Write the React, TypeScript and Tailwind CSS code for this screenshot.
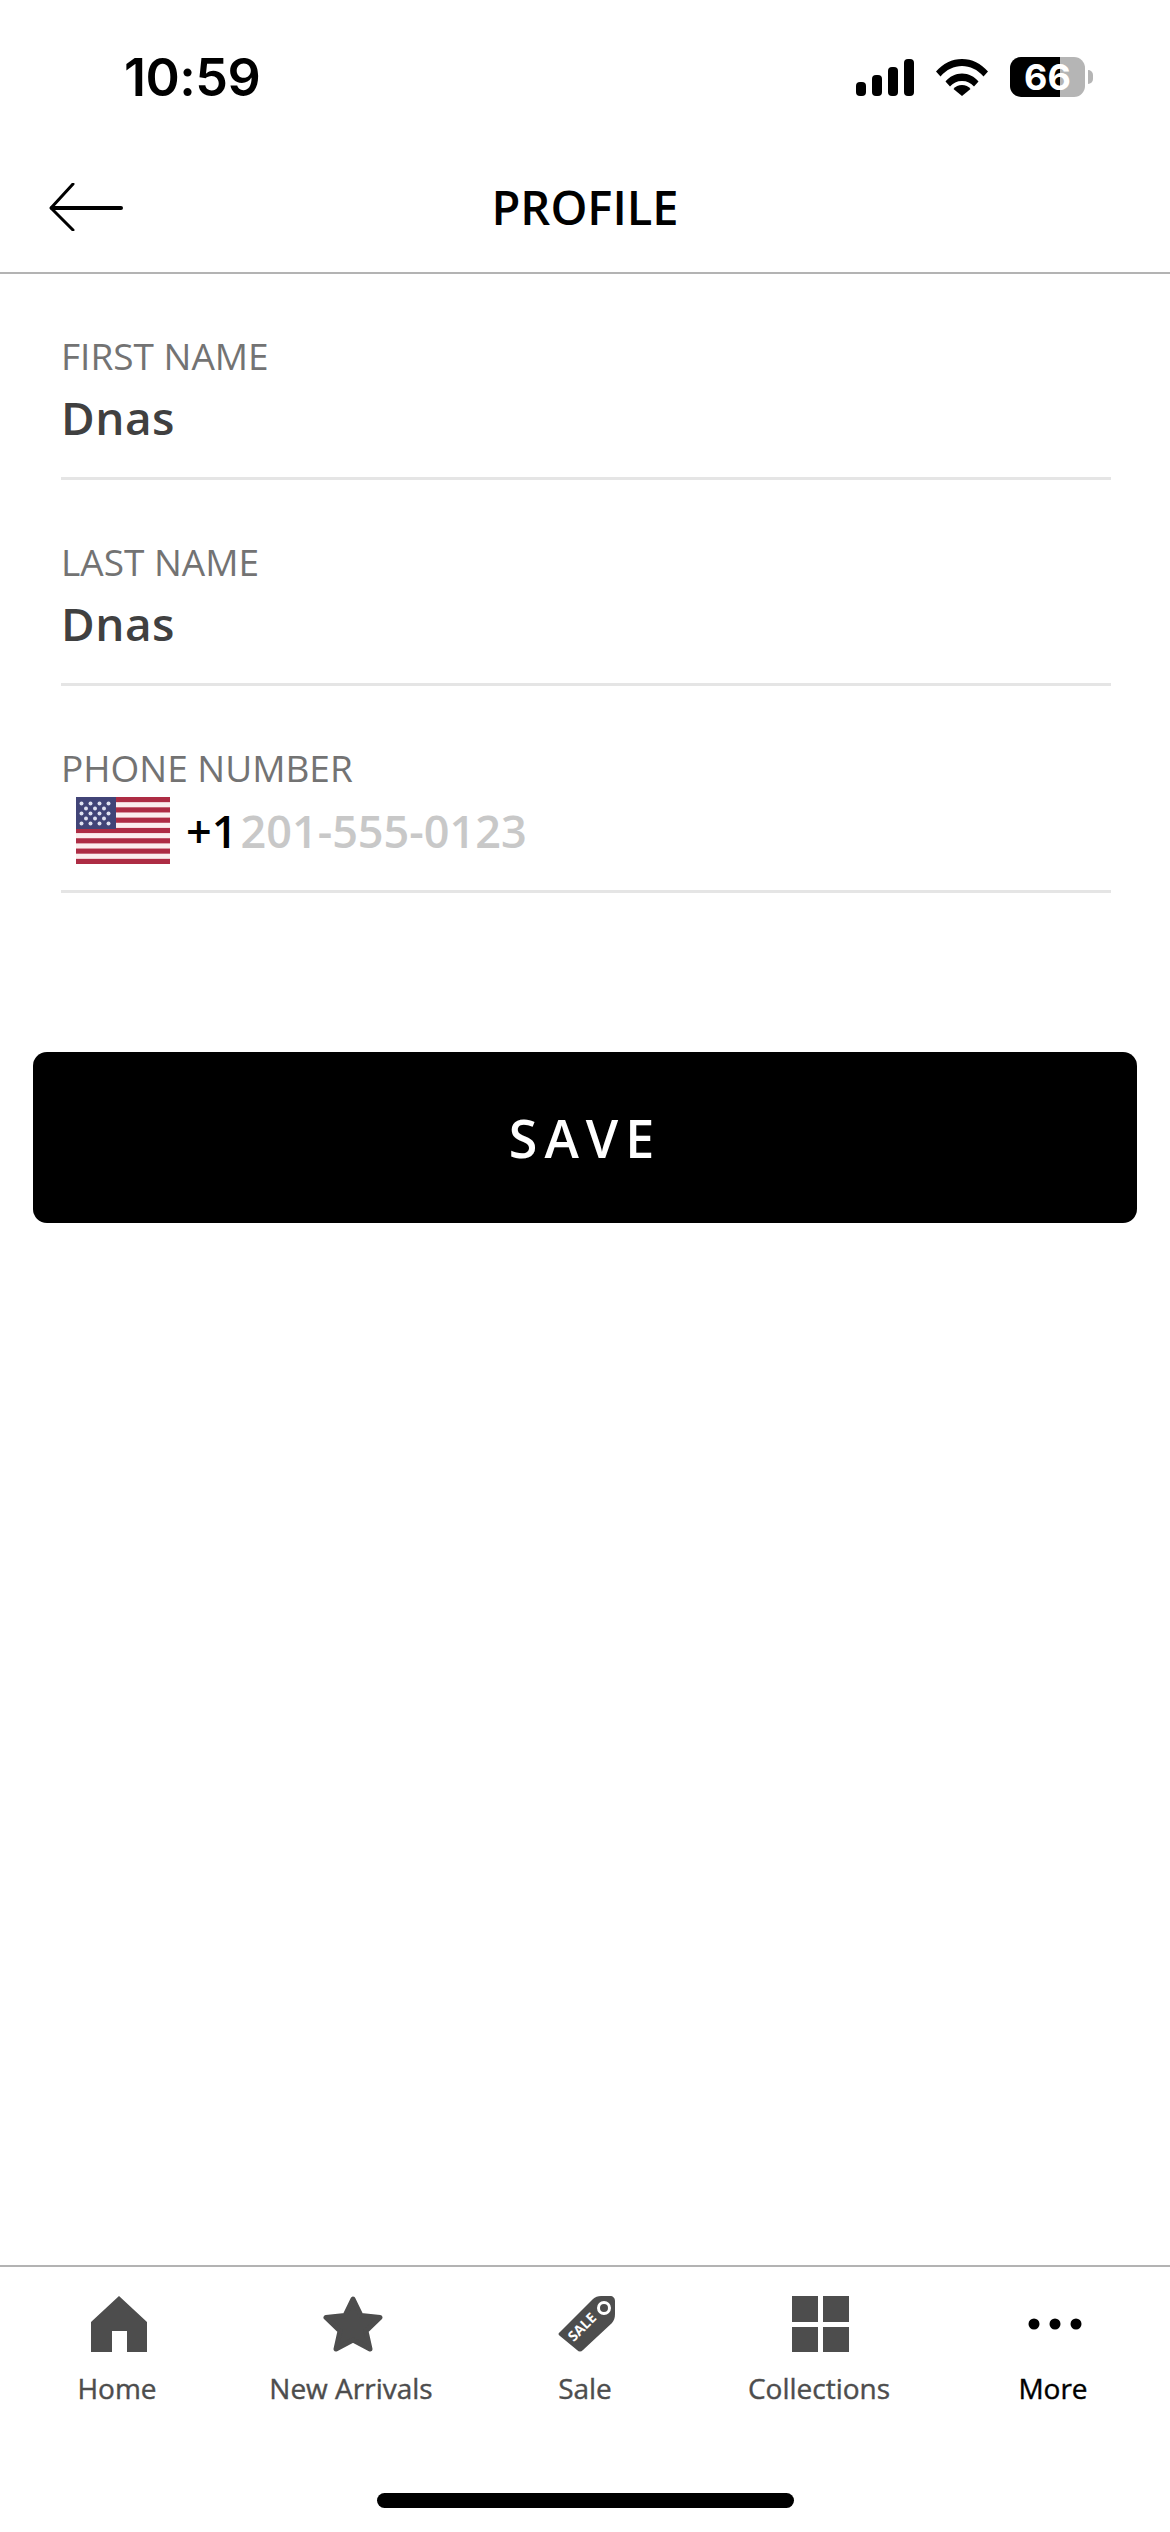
const FONT = "font-['Open_Sans',sans-serif]";

function Signal() {
  return (
    <svg width="58" height="37" viewBox="0 0 58 37" fill="#000">
      <rect x="0" y="23" width="10" height="14" rx="4" />
      <rect x="16" y="16" width="10" height="21" rx="4" />
      <rect x="32" y="8" width="10" height="29" rx="4" />
      <rect x="48" y="0" width="10" height="37" rx="4" />
    </svg>
  );
}

function Wifi() {
  return (
    <svg width="52" height="37" viewBox="0 0 52 37" fill="#000">
      <path d="M0 12.5C7 4.5 16 0 26 0s19 4.500 26 12.500l-4.500 5C41.500 10.500 34 7 26 7S10.500 10.500 4.500 17.500z" />
      <path d="M9.500 22.500C13.500 17.500 19.500 14.500 26 14.500s12.500 3 16.500 8L38 27.500c-3-3.500-7-5.500-12-5.500s-9 2-12 5.500z" />
      <path d="M17.500 30C19.500 27.500 22.500 26 26 26s6.500 1.500 8.500 4L26 37z" />
    </svg>
  );
}

function Battery() {
  return (
    <div className="flex items-center gap-[3px]">
      <div className="flex h-[40px] w-[75px] items-center justify-center rounded-[11px] bg-[linear-gradient(90deg,#000_50px,#b5b5b5_50px)] font-['Inter',sans-serif] text-[36px] leading-none font-bold text-white">
        66
      </div>
      <div className="h-[14px] w-[5px] rounded-r-full bg-[#b5b5b5]" />
    </div>
  );
}

function Field({ label, value }: { label: string; value: string }) {
  return (
    <div className="flex h-[206px] flex-col border-b-[3px] border-[#e5e5e5] pt-[60px]">
      <div className="text-[37px] leading-[44px] text-[#737373]">{label}</div>
      <div className="mt-[8px] text-[46px] leading-[62px] font-semibold tracking-[0.5px] text-[#404040]">{value}</div>
    </div>
  );
}

function Flag() {
  const stripes = [0, 2, 4, 6, 8, 10, 12];
  const stars: number[][] = [];
  for (let r = 0; r < 5; r++) {
    for (let c = 0; c < (r % 2 ? 3 : 4); c++) {
      stars.push([(r % 2 ? 10 : 5.500) + c * 9, 6.500 + r * 5]);
    }
  }
  return (
    <svg width="94" height="67" viewBox="0 0 94 67" className="shrink-0">
      <rect width="94" height="67" fill="#fbeeee" />
      {stripes.map((s) => (
        <rect key={s} y={(s * 67) / 13} width="94" height={67 / 13} fill="#ad2c44" />
      ))}
      <rect width="40" height="32" fill="#414477" />
      {stars.map(([x, y]) => (
        <circle key={`${x}-${y}`} cx={x} cy={y} r="2" fill="#dfe1f0" />
      ))}
    </svg>
  );
}

function HomeIcon() {
  return (
    <svg width="56" height="56" viewBox="0 0 56 56" fill="#4d4d4d">
      <path d="M28 0L56 26V56H36V35H21V56H0V26z" />
    </svg>
  );
}

function StarIcon() {
  return (
    <svg width="60" height="56" viewBox="0 0 60 56" fill="#4d4d4d">
      <path
        d="M30 3L38 19.500L57 21.500L43 35L47 53L30 44L13 53L17 35L3 21.500L22 19.500z"
        stroke="#4d4d4d"
        strokeWidth="5"
        strokeLinejoin="round"
      />
    </svg>
  );
}

function TagIcon() {
  return (
    <svg width="58" height="56" viewBox="0 0 58 56">
      <path
        d="M2 36L35 3C37 1 40 0 43 0L52 0C55 0 57 2 57 5V18C57 22 56 24 54 27L25 54C23 56 21 56 19 54L2 40C0 39 0 37 2 36z"
        fill="#4d4d4d"
      />
      <circle cx="46" cy="12" r="5.500" fill="none" stroke="#fff" strokeWidth="3" />
      <text
        x="24"
        y="36"
        textAnchor="middle"
        fill="#fff"
        fontSize="14"
        fontWeight="700"
        fontFamily="Open Sans, sans-serif"
        transform="rotate(-45 24 31)"
      >
        SALE
      </text>
    </svg>
  );
}

function GridIcon() {
  return (
    <div className="grid h-[56px] w-[57px] grid-cols-2 gap-[5px]">
      <div className="bg-[#4d4d4d]" />
      <div className="bg-[#4d4d4d]" />
      <div className="bg-[#4d4d4d]" />
      <div className="bg-[#4d4d4d]" />
    </div>
  );
}

function DotsIcon() {
  return (
    <svg width="54" height="56" viewBox="0 0 54 56" fill="#000">
      <circle cx="6" cy="28" r="5.500" />
      <circle cx="27" cy="28" r="5.500" />
      <circle cx="48" cy="28" r="5.500" />
    </svg>
  );
}

const TABS = [
  { label: 'Home', icon: <HomeIcon /> },
  { label: 'New Arrivals', icon: <StarIcon /> },
  { label: 'Sale', icon: <TagIcon /> },
  { label: 'Collections', icon: <GridIcon /> },
  { label: 'More', icon: <DotsIcon />, active: true },
];

export default function App() {
  return (
    <div className={`flex h-[2532px] w-[1170px] flex-col bg-white ${FONT}`}>
      {/* Status bar */}
      <div className="flex h-[155px] shrink-0 items-start justify-between pt-[57px] pr-[77px] pl-[124px]">
        <div className="font-['Inter',sans-serif] text-[52px] leading-[42px] font-semibold tracking-[-0.5px] text-black">
          10:59
        </div>
        <div className="flex items-center gap-[22px]">
          <Signal />
          <Wifi />
          <Battery />
        </div>
      </div>

      {/* Header */}
      <div className="flex h-[119px] shrink-0 items-start justify-center border-b-2 border-[#b3b3b3] pl-[49px]">
        <svg width="74" height="48" viewBox="0 0 74 48" fill="none" stroke="#000" strokeLinecap="round" strokeLinejoin="round" className="mt-[28px] shrink-0">
          <path d="M24 1L2 25L24 47" strokeWidth="3" />
          <path d="M3 25H72" strokeWidth="4" />
        </svg>
        <div className="ml-[-123px] flex-1 pt-[23px] text-center text-[47px] leading-[58px] font-semibold text-black">
          PROFILE
        </div>
      </div>

      {/* Form */}
      <div className="ml-[61px] w-[1050px] shrink-0">
        <Field label="FIRST NAME" value="Dnas" />
        <Field label="LAST NAME" value="Dnas" />
        <div className="flex h-[207px] flex-col border-b-[3px] border-[#e5e5e5] pt-[60px]">
          <div className="text-[37px] leading-[44px] text-[#737373]">PHONE NUMBER</div>
          <div className="mt-[7px] flex items-center pl-[15px]">
            <Flag />
            <span className="ml-[16px] text-[45px] leading-[67px] font-semibold text-black">+1</span>
            <span className="ml-[3px] text-[45px] leading-[67px] font-semibold text-[#c8c8c8]">201-555-0123</span>
          </div>
        </div>
      </div>

      {/* Save */}
      <div className="mx-[33px] mt-[159px] flex h-[171px] shrink-0 items-center justify-center rounded-[14px] bg-black text-[52px] font-semibold tracking-[7px] text-white">
        SAVE
      </div>

      {/* Tab bar */}
      <div className="mt-auto grid h-[267px] shrink-0 grid-cols-5 content-start border-t-2 border-[#b3b3b3] pt-[29px]">
        {TABS.map((t) => (
          <div key={t.label} className="flex flex-col items-center">
            <div className="flex h-[56px] items-center justify-center pl-[3px]">{t.icon}</div>
            <div className={`mt-[17px] text-[28px] leading-[38px] [-webkit-text-stroke:0.4px] ${t.active ? 'text-black' : 'text-[#4d4d4d]'}`}>
              {t.label}
            </div>
          </div>
        ))}
        <div className="col-span-5 flex justify-center pt-[86px]">
          <div className="h-[15px] w-[417px] rounded-full bg-black" />
        </div>
      </div>
    </div>
  );
}
